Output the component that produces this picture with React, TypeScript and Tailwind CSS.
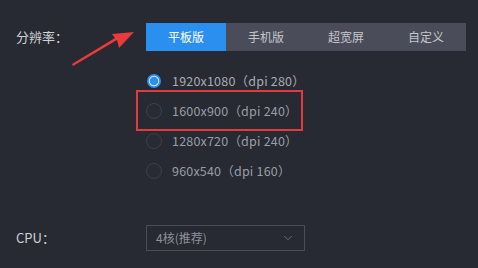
import { ChevronDown } from "lucide-react";

const TABS = ["平板版", "手机版", "超宽屏", "自定义"];
const RESOLUTIONS = [
  "1920x1080（dpi 280）",
  "1600x900（dpi 240）",
  "1280x720（dpi 240）",
  "960x540（dpi 160）",
];

const font = { fontFamily: '"Noto Sans CJK SC", "Noto Sans", sans-serif' };

function Radio({ checked }: { checked: boolean }) {
  if (checked) {
    return (
      <svg width="16" height="16" viewBox="0 0 16 16" className="shrink-0">
        <circle cx="8" cy="8" r="7" fill="#2b8ff0" />
        <circle cx="8" cy="8" r="5.2" fill="#dfe9f5" />
        <circle cx="8" cy="8" r="4.3" fill="#2b8ff0" />
      </svg>
    );
  }
  return <span className="w-4 h-4 shrink-0 rounded-full border border-[#3e414b] bg-[#282b33]" />;
}

export default function App() {
  return (
    <div className="relative w-[478px] h-[268px] bg-[#272a32] overflow-hidden" style={font}>
      <div className="flex items-center pt-[23px]">
        <span className="w-[146px] pl-4 text-[13px] text-[#cfd1d6]">分辨率：</span>
        <div className="flex h-[28px]">
          {TABS.map((t, i) => (
            <div
              key={t}
              className={
                i === 0
                  ? "w-[80px] flex items-center justify-center text-[12px] text-white bg-[#2b8ff0]"
                  : "w-[80px] flex items-center justify-center text-[12px] text-[#c4c6cc] bg-[#4a4d59]"
              }
            >
              {t}
            </div>
          ))}
        </div>
      </div>

      <div className="flex flex-col pl-[146px] pt-[15px]">
        {RESOLUTIONS.map((r, i) => (
          <div key={r} className="h-[30px] flex items-center gap-[10px]">
            <Radio checked={i === 0} />
            <span
              className={
                i === 0
                  ? "text-[12.5px] tracking-[0.2px] text-[#a9acb3]"
                  : "text-[12.5px] tracking-[0.2px] text-[#9a9da5]"
              }
            >
              {r}
            </span>
          </div>
        ))}
      </div>

      <div className="flex items-center mt-[39px]">
        <span className="w-[146px] pl-4 text-[13px] text-[#cfd1d6]">CPU：</span>
        <div className="w-[159px] h-[26px] flex items-center justify-between px-[9px] border border-[#4a4d57] text-[12px] text-[#8e9199]">
          <span>4核(推荐)</span>
          <ChevronDown size={14} strokeWidth={1.5} className="text-[#6f727a]" />
        </div>
      </div>

      {/* annotation box */}
      <div className="absolute left-[136px] top-[90px] w-[167px] h-[41px] border-2 border-[#e23b3b]" />

      {/* annotation arrow */}
      <svg className="absolute left-0 top-0" width="478" height="268" viewBox="0 0 478 268">
        <path d="M73 66 L117 40 L119 48 L134 32 L112 34 L115 38 L72 64 Z" fill="#ea3a3a" />
      </svg>
    </div>
  );
}
